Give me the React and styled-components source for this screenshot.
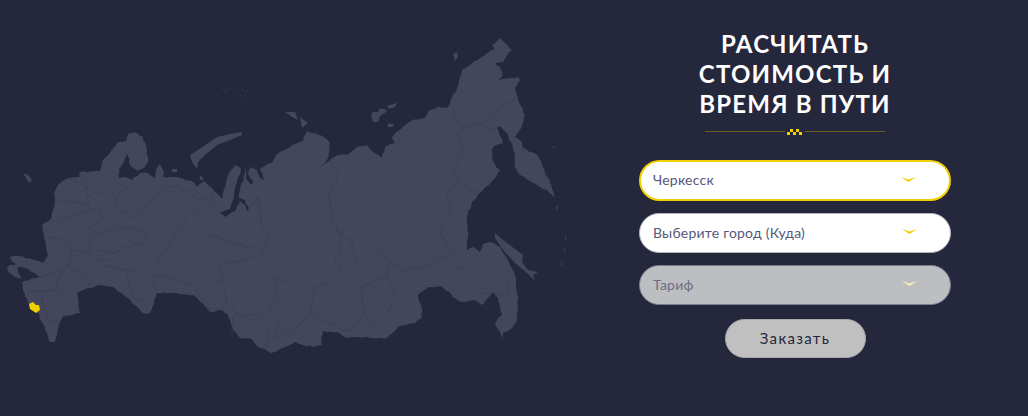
import React from "react";
import styled, { createGlobalStyle } from "styled-components";

const GlobalStyle = createGlobalStyle`
  html, body {
    margin: 0;
    padding: 0;
    background-color: #25273c;
  }
`;

const Page = styled.div`
  width: 1028px;
  height: 416px;
  display: flex;
  background-color: #25273c;
  overflow: hidden;
  font-family: "Lato", "Open Sans", sans-serif;
`;

const MapPane = styled.div`
  width: 639px;
  flex-shrink: 0;
`;

const MapSvg = styled.svg`
  display: block;
`;

const FormPane = styled.div`
  width: 312px;
  padding-top: 29px;
  display: flex;
  flex-direction: column;
  align-items: center;
`;

const Title = styled.h2`
  margin: 0;
  font-size: 24px;
  line-height: 30px;
  font-weight: 700;
  letter-spacing: 1.2px;
  color: #fff;
  text-align: center;
  text-transform: uppercase;
`;

const Divider = styled.div`
  width: 180px;
  height: 6px;
  margin: 10px 0 25px;
  display: flex;
  align-items: center;
  gap: 2px;
`;

const DividerLine = styled.div`
  flex: 1;
  height: 1px;
  margin-top: -1px;
  background-color: #6b5f22;
`;

const Fields = styled.div`
  width: 100%;
  display: flex;
  flex-direction: column;
  gap: 12px;
`;

const Select = styled.div`
  height: ${(p) => (p.$active ? "41px" : "40px")};
  box-sizing: border-box;
  padding: 0 33px 2px 13px;
  display: flex;
  align-items: center;
  justify-content: space-between;
  border-radius: 21px;
  border: ${(p) => (p.$active ? "2px solid #f2cf00" : "1px solid #b4b5bc")};
  padding-left: ${(p) => (p.$active ? "12px" : "13px")};
  background-color: ${(p) => (p.$disabled ? "#bdbec2" : "#fff")};
  border-color: ${(p) => p.$disabled && "#7d7e8c"};
  color: ${(p) => (p.$disabled ? "#6c6d80" : "#55587a")};
  font-size: 14px;
  letter-spacing: 0.22px;
`;

const Chevron = styled.svg`
  display: block;
  flex-shrink: 0;
  margin-top: -1px;
`;

const OrderButton = styled.button`
  width: 141px;
  height: 39px;
  margin-top: 14px;
  padding: 0 0 2px;
  border: 1px solid #a9a9ad;
  border-radius: 20px;
  background-color: #c0c0c0;
  color: #25273c;
  font-family: inherit;
  font-size: 15px;
  letter-spacing: 1.3px;
  cursor: pointer;
`;

const LAND =
  "M54 193L58 185L68 178L79 177L80 172L100 171L102 162L110 153L117 143L126 141L128 134L137 133L143 137L147 150L148 162L144 168L137 171L130 165L127 153L124 162L119 169L119 178L126 177L132 180L140 173L148 173L155 178L156 170L160 164L164 172L163 177L172 177L180 178L185 180L192 181L197 187L204 181L213 189L222 199L224 189L229 173L235 165L239 167L241 169L237 182L234 198L230 209L219 212L225 217L235 211L240 201L245 205L247 211L249 210L245 200L238 197L242 183L246 167L246 178L252 185L253 181L248 173L251 167L257 170L260 178L264 180L260 168L272 163L274 159L280 152L295 144L303 141L307 131L312 133L324 137L330 143L329 152L327 160L319 168L328 162L337 155L347 155L357 147L367 145L373 152L382 158L385 147L395 143L392 137L403 127L412 120L425 118L430 110L438 107L447 108L452 97L457 88L462 70L472 63L487 53L495 49L492 45L500 38L505 43L512 50L507 55L503 62L495 63L500 67L503 73L499 80L510 78L518 77L520 80L515 88L518 100L525 115L520 130L515 137L522 142L523 148L538 155L543 167L550 183L555 198L547 190L533 183L520 175L515 167L515 153L507 133L500 126L497 128L503 143L493 147L492 157L497 168L500 170L493 180L483 190L472 202L467 217L468 237L467 250L473 247L480 252L483 244L490 242L500 247L508 260L515 275L518 297L517 320L512 328L503 333L502 341L500 332L495 325L497 320L502 315L498 298L493 292L488 298L482 305L475 300L462 302L453 297L450 292L440 286L428 287L418 295L421 305L422 318L415 323L398 327L387 338L370 338L357 337L347 338L338 332L323 331L321 338L322 345L313 347L303 345L295 342L282 348L271 353L265 349L258 347L252 339L240 338L233 330L228 315L222 310L210 312L202 303L193 295L170 293L157 293L150 313L143 313L130 300L115 288L100 285L90 288L77 293L80 313L62 317L60 322L55 342L50 342L45 327L37 312L28 303L23 290L22 282L35 278L40 277L35 273L25 268L17 267L10 257L20 256L33 260L43 263L48 255L45 240L42 224L50 220L53 210L55 200Z";

const ISLANDS = [
  "M190 155L195 152L208 143L217 137L230 134L242 132L242 135L230 140L217 145L205 155L198 162L197 169L192 162Z",
  "M172 169L177 169L177 172L172 172Z",
  "M23 173L28 175L32 180L29 183L26 178Z",
  "M7 268L10 265L17 265L18 272L22 279L15 277L8 272Z",
  "M200 175L203 178L203 181L200 179Z",
  "M371 115L373 112L378 112L380 108L387 110L385 113L380 116L378 122L373 122Z",
  "M387 106L397 103L395 107L389 109Z",
  "M388 123L395 125L392 127L388 127Z",
  "M453 54L457 52L458 57L455 61Z",
  "M495 233L503 240L523 255L522 262L528 270L538 272L533 275L535 281L527 273L515 263L503 250L495 238Z",
  "M285 112L295 112L298 120L292 117Z",
  "M300 117L308 123L302 128Z",
  "M557 204L558 210L556 208Z",
  "M566 234L566 240L565 238Z",
  "M565 247L565 253L564 251Z",
  "M562 260L562 267L561 265Z",
  "M552 147L556 146L553 148Z",
];

const WEST_BORDERS = [
  "M240 458L255 500L270 555L245 550L195 540L165 540",
  "M205 475L255 500L290 520L320 510L345 530L370 510L400 490",
  "M345 530L350 570L400 590L430 575L480 510L530 495L600 540L640 520L635 550L570 580L530 630L500 690L460 740L440 760L385 750L310 740",
  "M170 610L215 590L270 570L300 570L305 600L270 625L255 610",
  "M270 650L350 625L400 625L440 640L430 670L380 680L340 700L310 690L270 700L270 650",
  "M135 650L190 660L210 690L270 700L280 720L330 720",
  "M215 680L205 735L170 780L175 810L200 830",
  "M110 775L150 765L205 735L250 770L270 800",
  "M80 810L120 815L170 810M120 815L140 890L165 920M135 920L180 900",
  "M380 750L385 790L400 830L435 850",
  "M470 815L460 770L500 770L560 790L590 810L600 830L625 870L670 860",
  "M620 760L640 790L670 780L660 730L720 725L790 700L805 650L785 620L775 530L745 570",
  "M670 800L680 850L720 890L800 880L830 830L830 770L870 790",
  "M700 885L695 950M780 890L805 920L800 985M835 900L820 960L870 930",
  "M620 640L700 670L760 685",
];

const EAST_BORDERS = [
  "M120 420L145 465L115 520L125 590L140 635L160 635L150 650L150 690L135 720L155 755L105 790L75 800L60 880L100 905L180 935L225 880L210 800L290 770L315 810L295 880L240 925",
  "M60 880L30 910L0 945",
  "M290 770L300 730L270 695L240 710L205 745L180 660L150 640",
  "M300 730L340 750L400 740L470 710L490 695L460 660L450 625L485 575L470 515L510 485L540 510L565 515",
  "M510 485L490 450L520 395L505 345L525 320L490 290L490 265",
  "M525 320L580 310L630 260L665 250L680 225",
  "M580 310L610 335L625 320",
  "M340 750L385 800",
  "M490 740L520 745L540 720",
  "M660 780L650 810L660 830L625 820L560 820",
];

const ARCTIC_DOTS = [
  [222, 88], [225, 90], [228, 89], [224, 92], [234, 91], [238, 90], [242, 90], [246, 91],
  [236, 94], [240, 95], [244, 94], [247, 97], [238, 98], [242, 99],
];

const CHECKER = [
  [3, 0], [9, 0], [0, 3], [6, 3], [12, 3],
];

// breaks straight segments into small wobbling steps so the coast and borders don't look polygonal
function roughen(d, step, amp) {
  let seed = 7;
  const next = () => {
    seed = (seed * 9301 + 49297) % 233280;
    return seed / 233280 - 0.5;
  };
  let out = "";
  let prev = null;
  let first = null;
  const parts = d.match(/[MLZ][^MLZ]*/g);
  parts.forEach((part) => {
    const cmd = part[0];
    if (cmd === "M") {
      prev = part.slice(1).split(" ").map(Number);
      first = prev;
      out += `M${prev[0]} ${prev[1]}`;
      return;
    }
    const to = cmd === "Z" ? first : part.slice(1).split(" ").map(Number);
    const dx = to[0] - prev[0];
    const dy = to[1] - prev[1];
    const len = Math.hypot(dx, dy);
    const count = Math.max(1, Math.round(len / step));
    for (let i = 1; i < count; i++) {
      const off = next() * amp * 2;
      const x = prev[0] + (dx * i) / count - (dy / len) * off;
      const y = prev[1] + (dy * i) / count + (dx / len) * off;
      out += `L${x.toFixed(1)} ${y.toFixed(1)}`;
    }
    out += `L${to[0]} ${to[1]}`;
    prev = to;
  });
  return cmd_close(d, out);
}

function cmd_close(d, out) {
  return d.endsWith("Z") ? `${out}Z` : out;
}

const ROUGH_LAND = roughen(LAND, 3.5, 0.8);
const ROUGH_WEST = WEST_BORDERS.map((d) => roughen(d, 9, 3.5));
const ROUGH_EAST = EAST_BORDERS.map((d) => roughen(d, 9, 3.5));

function RussiaMap() {
  return (
    <MapSvg width="639" height="416" viewBox="0 0 639 416">
      <g fill="#44475c">
        <path d={ROUGH_LAND} />
        {ISLANDS.map((d) => (
          <path key={d} d={d} />
        ))}
        {ARCTIC_DOTS.map(([x, y]) => (
          <rect key={`${x}-${y}`} x={x} y={y} width="1.5" height="1" opacity="0.6" />
        ))}
      </g>
      <g fill="none" stroke="#3a3c52" strokeWidth="2" transform="translate(0 20) scale(0.3333)">
        {ROUGH_WEST.map((d) => (
          <path key={d} d={d} />
        ))}
      </g>
      <g fill="none" stroke="#3a3c52" strokeWidth="2" transform="translate(290 20) scale(0.3333)">
        {ROUGH_EAST.map((d) => (
          <path key={d} d={d} />
        ))}
      </g>
      <path d="M29 304L33 302L36 305L39 305L40 310L36 313L33 311L30 309Z" fill="#f2cf00" />
    </MapSvg>
  );
}

function ChevronIcon({ faded }) {
  return (
    <Chevron width="15" height="5" viewBox="0 0 15 5">
      <path d="M0 0L7.5 2.6L15 0L7.5 5Z" fill={faded ? "#fbf3b0" : "#f2cf00"} />
    </Chevron>
  );
}

function App() {
  return (
    <Page>
      <GlobalStyle />
      <MapPane>
        <RussiaMap />
      </MapPane>
      <FormPane>
        <Title>
          Расчитать
          <br />
          стоимость и
          <br />
          время в пути
        </Title>
        <Divider>
          <DividerLine />
          <svg width="16" height="6" viewBox="0 0 16 6">
            {CHECKER.map(([x, y]) => (
              <rect key={`${x}-${y}`} x={x} y={y} width="3" height="3" fill="#f2cf00" />
            ))}
          </svg>
          <DividerLine />
        </Divider>
        <Fields>
          <Select $active>
            Черкесск
            <ChevronIcon />
          </Select>
          <Select>
            Выберите город (Куда)
            <ChevronIcon />
          </Select>
          <Select $disabled>
            Тариф
            <ChevronIcon faded />
          </Select>
        </Fields>
        <OrderButton>Заказать</OrderButton>
      </FormPane>
    </Page>
  );
}

export default App;
